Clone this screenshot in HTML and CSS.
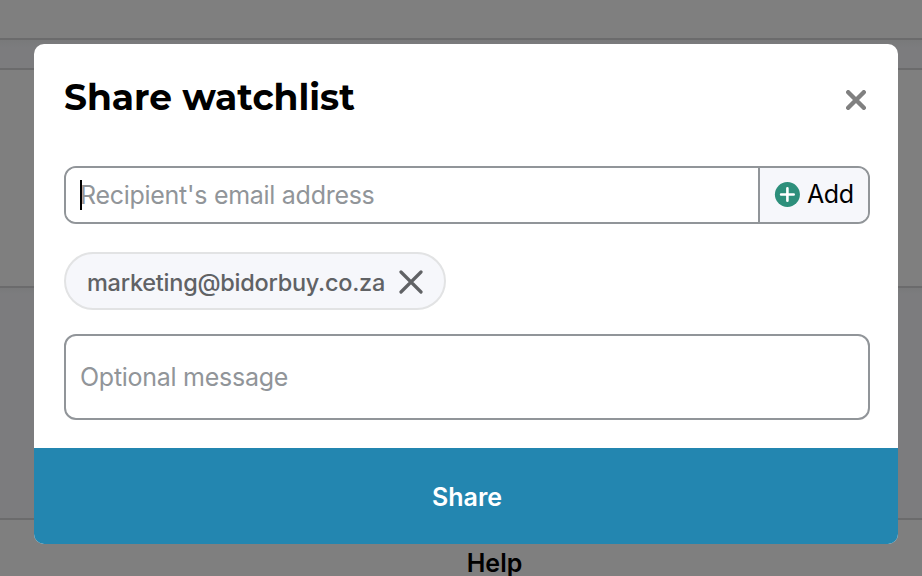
FILE: index.html
```html
<!DOCTYPE html>
<html lang="en">
<head>
    <meta charset="UTF-8">
    <meta name="viewport" content="width=device-width, initial-scale=1.0">
    <title>Share watchlist</title>
    <link rel="stylesheet" href="styles.css">
</head>
<body>
    <div class="page">
        <div class="page-header"></div>
        <div class="page-bar"></div>
        <div class="page-content"></div>
        <div class="page-links"></div>
        <div class="page-footer">Help</div>
    </div>

    <div class="overlay">
        <form class="modal">
            <div class="modal-body">
                <div class="modal-header">
                    <h2 class="modal-title">Share watchlist</h2>
                    <button type="button" class="close-button" aria-label="Close">
                        <svg width="20" height="20" viewBox="0 0 20 20">
                            <path d="M2.2 2.2L17.8 17.8M17.8 2.2L2.2 17.8" stroke="#808080" stroke-width="4.4" stroke-linecap="round"/>
                        </svg>
                    </button>
                </div>

                <div class="email-group">
                    <div class="email-field">
                        <input type="text" class="email-input" placeholder="Recipient's email address">
                        <span class="caret"></span>
                    </div>
                    <button type="button" class="add-button">
                        <svg width="26" height="26" viewBox="0 0 26 26">
                            <circle cx="13.4" cy="12.5" r="12.5" fill="#2d8f7b"/>
                            <path d="M13.4 6.2V18.8M7.1 12.5H19.7" stroke="#fff" stroke-width="2.6" stroke-linecap="round"/>
                        </svg>
                        <span class="add-label">Add</span>
                    </button>
                </div>

                <div class="chip">
                    <span class="chip-label">marketing@bidorbuy.co.za</span>
                    <svg width="24" height="24" viewBox="0 0 24 24">
                        <path d="M2 2L22 22M22 2L2 22" stroke="#606265" stroke-width="3.2" stroke-linecap="round"/>
                    </svg>
                </div>

                <input type="text" class="message-input" placeholder="Optional message">
            </div>
            <button type="button" class="share-button">Share</button>
        </form>
    </div>
</body>
</html>
```

FILE: styles.css
```css
* {
    box-sizing: border-box;
}
body {
    margin: 0;
    height: 576px;
    overflow: hidden;
    font-family: Inter, "Liberation Sans", sans-serif;
    font-size: 25px;
    color: #000;
}
button, input {
    font: inherit;
    color: inherit;
    margin: 0;
}
button {
    border: none;
    padding: 0;
    cursor: pointer;
}
svg {
    display: block;
    flex: none;
    fill: none;
}
/* Page behind the modal */
.page-header {
    height: 40px;
    border-bottom: 2px solid #d6d7d9;
}
.page-bar {
    height: 30px;
    background: linear-gradient(#f2f3f5, #f8f9fd 8px);
    border-bottom: 2px solid #d6d7d9;
}
.page-content {
    height: 218px;
    border-bottom: 2px solid #d6d7d9;
}
.page-links {
    height: 232px;
    background: linear-gradient(#f2f3f5, #f8f9fd 6px);
    border-bottom: 2px solid #d6d7d9;
}
.page-footer {
    height: 56px;
    padding: 28px 0 0 67px;
    text-align: center;
    line-height: 30px;
    font-weight: 600;
}
.overlay {
    position: fixed;
    inset: 0;
    padding: 44px 24px 32px 34px;
    background: rgba(0, 0, 0, 0.5);
}
.modal {
    display: flex;
    flex-direction: column;
    height: 500px;
    background: #fff;
    border-radius: 10px;
    overflow: hidden;
}
.modal-body {
    flex: 1;
    padding: 30px 28px 0 30px;
}
.modal-header {
    display: flex;
    justify-content: space-between;
    height: 92px;
}
.modal-title {
    margin: 0;
    font-family: Montserrat, Inter, sans-serif;
    font-size: 36px;
    font-weight: 700;
    line-height: 47px;
}
.close-button {
    align-self: flex-start;
    margin: 16px 4px 0 0;
    background: none;
}
.email-group {
    display: flex;
    height: 58px;
    border: 2px solid #919599;
    border-radius: 12px;
    overflow: hidden;
}
.email-field {
    position: relative;
    flex: 1;
}
.email-input {
    width: 100%;
    height: 100%;
    padding: 0 14px;
    border: none;
    outline: none;
    background: #fff;
    letter-spacing: -0.28px;
}
.email-input::placeholder,
.message-input::placeholder {
    color: #919599;
    opacity: 1;
}
/* Text cursor of the focused field */
.caret {
    position: absolute;
    left: 14px;
    top: 12px;
    width: 2px;
    height: 30px;
    background: #000;
}
.add-button {
    display: flex;
    align-items: center;
    gap: 7px;
    width: 110px;
    padding-left: 14px;
    background: #f6f7fb;
    border-left: 2px solid #919599;
}
.add-label {
    margin-bottom: 3px;
    letter-spacing: -0.4px;
}
.chip {
    display: flex;
    align-items: center;
    gap: 14px;
    width: 382px;
    height: 58px;
    margin: 28px 0 24px;
    padding: 2px 0 0 21px;
    background: #f6f7fb;
    border: 2px solid #e2e3e4;
    border-radius: 29px;
    color: #606265;
    font-weight: 500;
}
.chip-label {
    width: 298px;
    white-space: nowrap;
    font-size: 23.5px;
    letter-spacing: -0.25px;
}
.message-input {
    display: block;
    width: 100%;
    height: 86px;
    padding: 0 14px;
    border: 2px solid #919599;
    border-radius: 12px;
    outline: none;
    letter-spacing: -0.27px;
}
.share-button {
    height: 96px;
    background: #2386b0;
    color: #fff;
    font-weight: 600;
    padding: 2px 0 0 2px;
}
```
